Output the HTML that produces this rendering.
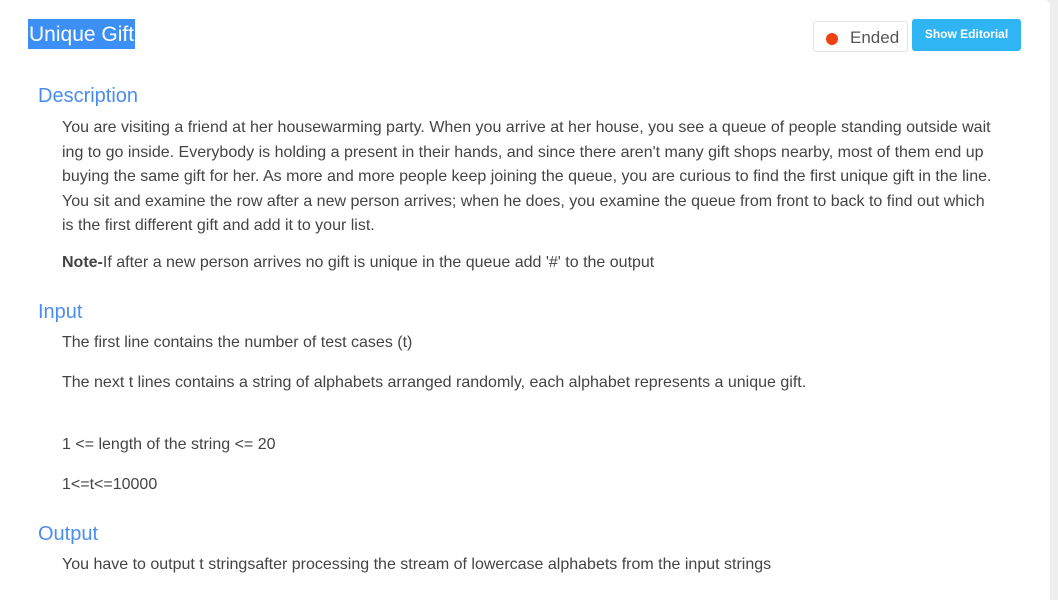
<!DOCTYPE html>
<html><head><meta charset="utf-8"><style>
html,body{margin:0;padding:0;background:#eee;}
body{width:1058px;height:585px;overflow:hidden;position:relative;font-family:"Liberation Sans",Arial,sans-serif;}
.card{position:absolute;left:0;top:0;width:1050px;height:600px;background:#fff;border-top-right-radius:6px;}
.title{position:absolute;left:28px;top:19px;height:30px;background:#3b8ff5;color:#fff;font-size:21px;line-height:31px;padding:0 1px;}
.ended{position:absolute;left:813px;top:21px;width:95px;height:31px;border:1px solid #e3e3e3;border-radius:3px;box-sizing:border-box;font-size:17px;color:#555;line-height:31px;}
.ended .dot{position:absolute;left:12px;top:11px;width:12px;height:12px;border-radius:50%;background:#ee4112;}
.ended span{position:absolute;left:36px;}
.btn{position:absolute;left:912px;top:19px;width:109px;height:32px;background:#2fb5f3;border-radius:3px;color:#fff;font-size:12px;font-weight:bold;text-align:center;line-height:31px;}
h2{position:absolute;left:38px;margin:0;font-weight:normal;font-size:20px;color:#4a8df0;line-height:24px;}
p{position:absolute;left:62px;margin:0;font-size:16px;color:#444;line-height:24.6px;width:940px;}
</style></head><body>
<div class="card"></div>
<div class="title">Unique Gift</div>
<div class="ended"><div class="dot"></div><span>Ended</span></div>
<div class="btn">Show Editorial</div>
<h2 style="top:84px">Description</h2>
<p style="top:116px">You are visiting a friend at her housewarming party. When you arrive at her house, you see a queue of people standing outside wait<br>ing to go inside. Everybody is holding a present in their hands, and since there aren't many gift shops nearby, most of them end up<br>buying the same gift for her. As more and more people keep joining the queue, you are curious to find the first unique gift in the line.<br>You sit and examine the row after a new person arrives; when he does, you examine the queue from front to back to find out which<br>is the first different gift and add it to your list.</p>
<p style="top:251px"><b>Note-</b>If after a new person arrives no gift is unique in the queue add '#' to the output</p>
<h2 style="top:300px">Input</h2>
<p style="top:331px">The first line contains the number of test cases (t)</p>
<p style="top:371px">The next t lines contains a string of alphabets arranged randomly, each alphabet represents a unique gift.</p>
<p style="top:433px">1 &lt;= length of the string &lt;= 20</p>
<p style="top:473px">1&lt;=t&lt;=10000</p>
<h2 style="top:522px">Output</h2>
<p style="top:553px">You have to output t stringsafter processing the stream of lowercase alphabets from the input strings</p>
</body></html>
